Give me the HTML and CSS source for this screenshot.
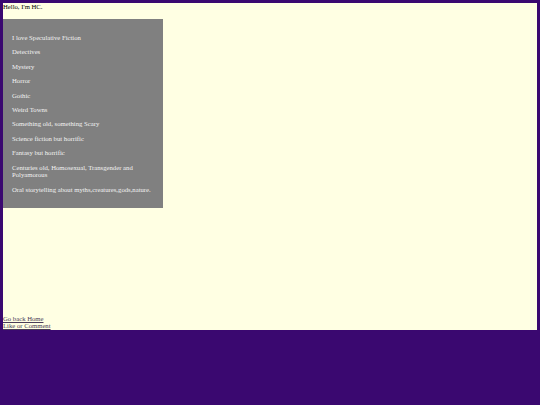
FILE: index.html
```html
<!DOCTYPE html>
<html>
<head>
<meta charset="utf-8">
<link rel="stylesheet" href="styles.css">
</head>
<body>
<div class="page">
  <div class="hello">Hello, I'm HC.</div>
  <div class="interests">
    <p>I love Speculative Fiction</p>
    <p>Detectives</p>
    <p>Mystery</p>
    <p>Horror</p>
    <p>Gothic</p>
    <p>Weird Towns</p>
    <p>Something old, something Scary</p>
    <p>Science fiction but horrific</p>
    <p>Fantasy but horrific</p>
    <p>Centuries old, Homosexual, Transgender and Polyamorous</p>
    <p>Oral storytelling about myths,creatures,gods,nature.</p>
  </div>
  <div class="links">
    <a href="#">Go back Home</a>
    <a href="#">Like or Comment</a>
  </div>
</div>
</body>
</html>
```
FILE: styles.css
```css
html, body {
  margin: 0;
  padding: 0;
}
body {
  background: #3a0870;
  padding: 3px;
  height: 405px;
  box-sizing: border-box;
  font-family: "Liberation Serif", "Times New Roman", serif;
  font-size: 6.7px;
  line-height: 7.7px;
}
.page {
  background: #ffffe3;
  height: 327px;
  display: flex;
  flex-direction: column;
  color: #000;
}
.hello {
  margin: 0;
}
.interests {
  margin-top: 8.3px;
  width: 160px;
  box-sizing: border-box;
  background: #808080;
  color: #f2f2f2;
  padding: 8.4px 9px;
}
.interests p {
  margin: 6.7px 0;
}
.links {
  margin-top: auto;
  display: flex;
  flex-direction: column;
  align-items: flex-start;
}
.links a {
  color: #4a3b58;
  text-decoration: underline;
}
```
